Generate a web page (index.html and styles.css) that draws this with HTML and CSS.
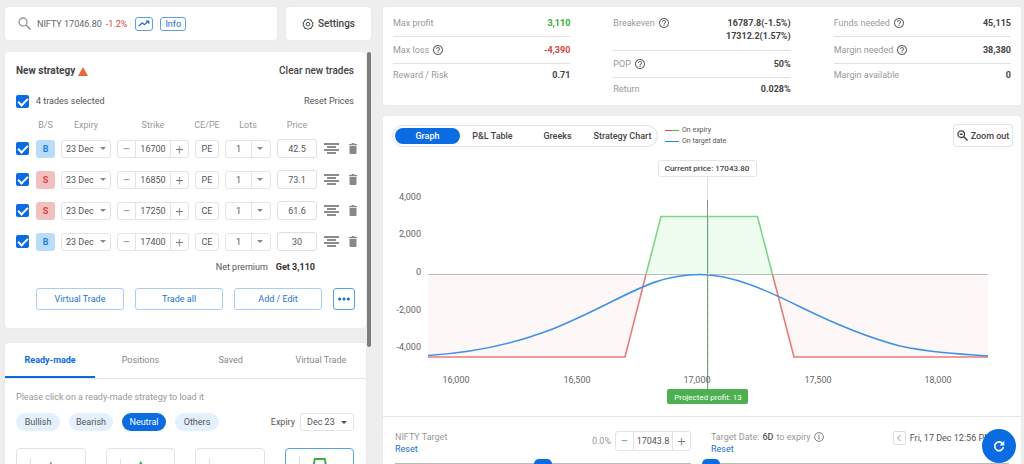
FILE: index.html
```html
<!DOCTYPE html>
<html lang="en">
<head>
<meta charset="utf-8">
<title>NIFTY strategy builder</title>
<link rel="stylesheet" href="styles.css">
</head>
<body>
<svg class="sprite" width="0" height="0" aria-hidden="true">
  <symbol id="help" viewBox="0 0 24 24"><path d="M11 18h2v-2h-2v2zm1-16C6.480 2 2 6.480 2 12s4.480 10 10 10 10-4.480 10-10S17.520 2 12 2zm0 18c-4.410 0-8-3.590-8-8s3.590-8 8-8 8 3.590 8 8-3.590 8-8 8zm0-14c-2.210 0-4 1.790-4 4h2c0-1.100.9-2 2-2s2 .9 2 2c0 2-3 1.750-3 5h2c0-2.250 3-2.500 3-5 0-2.210-1.790-4-4-4z"/></symbol>
  <symbol id="caret" viewBox="0 0 10 5"><path d="M0 0h10L5 5z"/></symbol>
  <symbol id="depth" viewBox="0 0 15 11"><path d="M0 1h15M3 4h9M0 7h15M3 10h9" fill="none" stroke="currentColor" stroke-width="1.300"/></symbol>
  <symbol id="trash" viewBox="0 0 8 11"><path d="M0 1h2.200L3 0h2l.8 1H8v1.200H0zM.5 3h7v7a1 1 0 0 1-1 1h-5a1 1 0 0 1-1-1z"/></symbol>
</svg>
<div class="app">
  <section class="left">
    <div class="topbar">
      <div class="card search">
        <svg class="search-icon" viewBox="0 0 13 13"><circle cx="5" cy="5" r="4" fill="none" stroke="currentColor" stroke-width="1.300"/><path d="M8 8l4.500 4.500" stroke="currentColor" stroke-width="1.600"/></svg>
        <span class="symbol-name">NIFTY 17046.80</span>
        <span class="down change">-1.2%</span>
        <button class="tag tag-chart" aria-label="Chart"><svg viewBox="0 0 12 7"><path d="M1 6l3.200-3.200 2.200 2L10.500 1M7.800 1h3v2.800" fill="none" stroke="currentColor" stroke-width="1.200"/></svg></button>
        <button class="tag">Info</button>
      </div>
      <button class="card settings">
        <svg viewBox="0 0 24 24"><path d="M12 1.500l2.600 2.700 3.700-.5.600 3.700 3.300 1.700L20.500 12.500l1.700 3.400-3.300 1.700-.6 3.700-3.700-.6L12 23l-2.600-2.300-3.700.6-.6-3.700-3.300-1.700 1.700-3.400-1.700-3.400 3.300-1.700.6-3.700 3.700.5z" fill="none" stroke="currentColor" stroke-width="2" stroke-linejoin="round"/><circle cx="12" cy="12.300" r="3.600" fill="none" stroke="currentColor" stroke-width="2"/></svg>
        Settings
      </button>
    </div>
    <div class="scroller">
      <div class="stack">
        <div class="card strategy">
          <div class="line title-line">
            <h2 class="title">New strategy <svg class="warn" viewBox="0 0 10 9"><path d="M5 0l5 9H0z"/></svg></h2>
            <button class="plain clear">Clear new trades</button>
          </div>
          <div class="line select-line">
            <label class="all"><input type="checkbox" class="tick" checked>4 trades selected</label>
            <button class="plain">Reset Prices</button>
          </div>
          <table class="trades">
            <colgroup><col class="c-tick"><col class="c-side"><col class="c-expiry"><col class="c-strike"><col class="c-type"><col class="c-lots"><col class="c-price"><col class="c-depth"><col class="c-trash"></colgroup>
            <thead><tr><th></th><th>B/S</th><th>Expiry</th><th>Strike</th><th>CE/PE</th><th>Lots</th><th>Price</th><th></th><th></th></tr></thead>
            <tbody>
              <tr>
                <td class="tick-cell"><input type="checkbox" class="tick" aria-label="Select 16700 PE" checked></td>
                <td><button class="side buy">B</button></td>
                <td><span class="pick"><select aria-label="Expiry"><option>23 Dec</option></select><svg class="caret"><use href="#caret"/></svg></span></td>
                <td><span class="stepper"><button aria-label="Lower strike">−</button><input type="text" aria-label="Strike" value="16700"><button aria-label="Raise strike">+</button></span></td>
                <td><button class="kind">PE</button></td>
                <td><span class="pick lots"><select aria-label="Lots"><option>1</option></select><svg class="caret"><use href="#caret"/></svg></span></td>
                <td><input type="text" class="price" aria-label="Price" value="42.5"></td>
                <td><button class="plain icon" aria-label="Market depth"><svg class="depth"><use href="#depth"/></svg></button></td>
                <td><button class="plain icon" aria-label="Delete"><svg class="trash"><use href="#trash"/></svg></button></td>
              </tr>
              <tr>
                <td class="tick-cell"><input type="checkbox" class="tick" aria-label="Select 16850 PE" checked></td>
                <td><button class="side sell">S</button></td>
                <td><span class="pick"><select aria-label="Expiry"><option>23 Dec</option></select><svg class="caret"><use href="#caret"/></svg></span></td>
                <td><span class="stepper"><button aria-label="Lower strike">−</button><input type="text" aria-label="Strike" value="16850"><button aria-label="Raise strike">+</button></span></td>
                <td><button class="kind">PE</button></td>
                <td><span class="pick lots"><select aria-label="Lots"><option>1</option></select><svg class="caret"><use href="#caret"/></svg></span></td>
                <td><input type="text" class="price" aria-label="Price" value="73.1"></td>
                <td><button class="plain icon" aria-label="Market depth"><svg class="depth"><use href="#depth"/></svg></button></td>
                <td><button class="plain icon" aria-label="Delete"><svg class="trash"><use href="#trash"/></svg></button></td>
              </tr>
              <tr>
                <td class="tick-cell"><input type="checkbox" class="tick" aria-label="Select 17250 CE" checked></td>
                <td><button class="side sell">S</button></td>
                <td><span class="pick"><select aria-label="Expiry"><option>23 Dec</option></select><svg class="caret"><use href="#caret"/></svg></span></td>
                <td><span class="stepper"><button aria-label="Lower strike">−</button><input type="text" aria-label="Strike" value="17250"><button aria-label="Raise strike">+</button></span></td>
                <td><button class="kind">CE</button></td>
                <td><span class="pick lots"><select aria-label="Lots"><option>1</option></select><svg class="caret"><use href="#caret"/></svg></span></td>
                <td><input type="text" class="price" aria-label="Price" value="61.6"></td>
                <td><button class="plain icon" aria-label="Market depth"><svg class="depth"><use href="#depth"/></svg></button></td>
                <td><button class="plain icon" aria-label="Delete"><svg class="trash"><use href="#trash"/></svg></button></td>
              </tr>
              <tr>
                <td class="tick-cell"><input type="checkbox" class="tick" aria-label="Select 17400 CE" checked></td>
                <td><button class="side buy">B</button></td>
                <td><span class="pick"><select aria-label="Expiry"><option>23 Dec</option></select><svg class="caret"><use href="#caret"/></svg></span></td>
                <td><span class="stepper"><button aria-label="Lower strike">−</button><input type="text" aria-label="Strike" value="17400"><button aria-label="Raise strike">+</button></span></td>
                <td><button class="kind">CE</button></td>
                <td><span class="pick lots"><select aria-label="Lots"><option>1</option></select><svg class="caret"><use href="#caret"/></svg></span></td>
                <td><input type="text" class="price" aria-label="Price" value="30"></td>
                <td><button class="plain icon" aria-label="Market depth"><svg class="depth"><use href="#depth"/></svg></button></td>
                <td><button class="plain icon" aria-label="Delete"><svg class="trash"><use href="#trash"/></svg></button></td>
              </tr>
            </tbody>
          </table>
          <div class="premium"><span>Net premium</span><b>Get 3,110</b></div>
          <div class="actions">
            <button class="action">Virtual Trade</button>
            <button class="action">Trade all</button>
            <button class="action">Add / Edit</button>
            <button class="action more" aria-label="More"><svg viewBox="0 0 12 4"><circle cx="1.700" cy="2" r="1.500"/><circle cx="6" cy="2" r="1.500"/><circle cx="10.300" cy="2" r="1.500"/></svg></button>
          </div>
        </div>
        <div class="card library">
          <div class="lib-tabs">
            <button class="lib-tab on">Ready-made</button>
            <button class="lib-tab">Positions</button>
            <button class="lib-tab">Saved</button>
            <button class="lib-tab">Virtual Trade</button>
          </div>
          <div class="lib-body">
            <p class="hint">Please click on a ready-made strategy to load it</p>
            <div class="filters">
              <button class="chip">Bullish</button>
              <button class="chip">Bearish</button>
              <button class="chip on">Neutral</button>
              <button class="chip">Others</button>
              <label class="expiry">Expiry <span class="pick dark"><select><option>Dec 23</option></select><svg class="caret"><use href="#caret"/></svg></span></label>
            </div>
            <div class="tiles">
              <button class="tile" aria-label="Short straddle"><svg viewBox="0 0 68 50"><path class="axis" d="M13.500 10v36"/><path class="gain" d="M22 40L34 15l12 25"/></svg></button>
              <button class="tile" aria-label="Iron butterfly"><svg viewBox="0 0 68 50"><path class="axis" d="M13.500 10v36"/><path class="gain" d="M24 40l7-20 3-6 3 6 7 20"/></svg></button>
              <button class="tile" aria-label="Short strangle"><svg viewBox="0 0 68 50"><path class="axis" d="M13.500 10v36"/><path class="gain" d="M22 40l8-20h8l8 20"/></svg></button>
              <button class="tile on" aria-label="Iron condor"><svg viewBox="0 0 68 50"><path class="axis" d="M13.500 7v36"/><path class="gain" d="M24 36l5-26h10l5 26"/></svg></button>
            </div>
          </div>
        </div>
      </div>
      <div class="bar"></div>
    </div>
  </section>
  <main class="right">
    <dl class="card stats">
      <div class="col">
        <div class="stat"><dt>Max profit</dt><dd class="up">3,110</dd></div>
        <div class="stat"><dt>Max loss <svg class="help"><use href="#help"/></svg></dt><dd class="down">-4,390</dd></div>
        <div class="stat"><dt>Reward / Risk</dt><dd>0.71</dd></div>
      </div>
      <div class="col">
        <div class="stat"><dt>Breakeven <svg class="help"><use href="#help"/></svg></dt><dd class="double">16787.8(-1.5%)<br>17312.2(1.57%)</dd></div>
        <div class="stat"><dt>POP <svg class="help"><use href="#help"/></svg></dt><dd>50%</dd></div>
        <div class="stat"><dt>Return</dt><dd>0.028%</dd></div>
      </div>
      <div class="col">
        <div class="stat"><dt>Funds needed <svg class="help"><use href="#help"/></svg></dt><dd>45,115</dd></div>
        <div class="stat"><dt>Margin needed <svg class="help"><use href="#help"/></svg></dt><dd>38,380</dd></div>
        <div class="stat"><dt>Margin available</dt><dd>0</dd></div>
      </div>
    </dl>
    <div class="card graph">
      <div class="graph-head">
        <div class="views">
          <button class="view on">Graph</button>
          <button class="view">P&amp;L Table</button>
          <button class="view">Greeks</button>
          <button class="view">Strategy Chart</button>
        </div>
        <div class="legend">
          <span><i class="key expiry-key"></i>On expiry</span>
          <span><i class="key date-key"></i>On target date</span>
        </div>
        <button class="zoom-out"><svg viewBox="0 0 11 11"><circle cx="4.200" cy="4.200" r="3.300" fill="none" stroke="currentColor" stroke-width="1.300"/><path d="M2.700 4.200h3M6.800 6.800l3.700 3.700" stroke="currentColor" stroke-width="1.400" fill="none"/></svg>Zoom out</button>
      </div>
      <svg class="payoff" viewBox="0 0 638 260" role="img" aria-label="Payoff by NIFTY price">
        <path class="loss-area" d="M45 118.500H263L242 201H45zM389.500 118.500H605V201H411z"/>
        <path class="gain-area" d="M263 118.500L278 60.500H374.500L389.500 118.500z"/>
        <path class="zero" d="M45 118.500H605"/>
        <path class="loss" d="M45 201H242L263 118.500M389.500 118.500L411 201H605"/>
        <path class="profit" d="M263 118.500L278 60.500H374.500L389.500 118.500"/>
        <path class="target" d="M45 199.500C85 197 124 190 163.700 175.300C186 167 208 156 230 145C260 130 283 118.500 317 118.500C350 118.500 385 135 417 150.700C450 167 483 181 517 190C545 196 575 198 605 200"/>
        <path class="stem" d="M324.500 20V45"/>
        <path class="now" d="M324.500 44V233"/>
        <path class="now-soft" d="M325.500 60V233"/>
        <g class="ticks y">
          <text x="38" y="44">4,000</text><text x="38" y="81">2,000</text><text x="38" y="119">0</text><text x="38" y="157">-2,000</text><text x="38" y="194">-4,000</text>
        </g>
        <g class="ticks x">
          <text x="73" y="227">16,000</text><text x="194" y="227">16,500</text><text x="314" y="227">17,000</text><text x="435" y="227">17,500</text><text x="555" y="227">18,000</text>
        </g>
        <rect class="price-box" x="275.500" y="4.500" width="98" height="16" rx="2"/>
        <text class="price-text" x="324" y="15">Current price: 17043.80</text>
        <rect class="profit-box" x="284" y="233" width="81" height="15" rx="2"/>
        <text class="profit-text" x="325" y="244">Projected profit: 13</text>
      </svg>
      <div class="controls">
        <div class="control">
          <div class="control-head">
            <div class="name"><span>NIFTY Target</span><a href="#">Reset</a></div>
            <span class="pct">0.0%</span>
            <span class="stepper wide"><button aria-label="Lower target">−</button><input type="text" aria-label="NIFTY target" value="17043.8"><button aria-label="Raise target">+</button></span>
          </div>
          <input type="range" class="slider" aria-label="NIFTY target" min="0" max="100" value="50">
        </div>
        <div class="control">
          <div class="control-head">
            <div class="name"><span>Target Date: <b>6D</b> to expiry <svg class="info" viewBox="0 0 12 12"><circle cx="6" cy="6" r="5.300" fill="none" stroke="currentColor"/><path d="M6 5.200V9M6 3v1.300" stroke="currentColor" stroke-width="1.200"/></svg></span><a href="#">Reset</a></div>
            <div class="date">
              <button class="step" aria-label="Previous day"><svg viewBox="0 0 6 8"><path d="M4.500 1L1.500 4l3 3" fill="none" stroke="currentColor"/></svg></button>
              <span>Fri, 17 Dec 12:56 PM</span>
              <button class="step" aria-label="Next day"><svg viewBox="0 0 6 8"><path d="M1.500 1l3 3-3 3" fill="none" stroke="currentColor"/></svg></button>
            </div>
          </div>
          <input type="range" class="slider from-start" aria-label="Target date" min="0" max="6" value="0">
        </div>
      </div>
    </div>
  </main>
</div>
<button class="fab" aria-label="Refresh"><svg viewBox="0 0 24 24"><path d="M18.500 8.500A7.500 7.500 0 1 0 19.500 14" fill="none" stroke="currentColor" stroke-width="2.800"/><path d="M21 3v8h-8z"/></svg></button>
</body>
</html>
```
FILE: styles.css
```css
* { box-sizing: border-box; }
html { overflow: hidden; }
body {
  margin: 0;
  height: 100vh;
  overflow: hidden;
  background: #eee;
  color: #555;
  font: 9px/12px Roboto, "Liberation Sans", sans-serif;
}
button, input, select { font: inherit; color: inherit; margin: 0; padding: 0; border: 0; background: none; }
button { cursor: pointer; }
svg { display: block; fill: currentColor; }
h2, p, dl, dd { margin: 0; }
a { color: #1b6fd0; text-decoration: none; }
.sprite { position: absolute; }
.card { background: #fff; border-radius: 3px; box-shadow: 0 0 1px #0002; }
.up { color: #2eb135; }
.down { color: #d84343; }
.plain { display: inline-block; }

.app {
  display: grid;
  grid-template-columns: minmax(0, 366fr) minmax(0, 638fr);
  gap: 12px;
  height: 100vh;
  overflow: hidden;
  padding: 7px 3px 0 5px;
}

/* Search and settings */
.topbar { display: flex; gap: 9px; }
.search { flex: 1; display: flex; align-items: center; height: 33px; padding-left: 13px; }
.search-icon { width: 13px; height: 13px; color: #999; margin-right: 6px; }
.symbol-name { color: #666; margin-right: 4px; }
.change { margin-right: 8px; }
.tag { height: 14px; padding: 0 4px; border: 1px solid #5b9fe8; border-radius: 3px; color: #1b6fd0; margin-right: 7px; }
.tag-chart { padding: 0 2px; }
.tag-chart svg { width: 12px; height: 7px; }
.settings { display: flex; align-items: center; justify-content: center; gap: 4px; width: 85px; font-size: 10px; font-weight: 500; color: #444; }
.settings svg { width: 12px; height: 12px; }

.scroller { display: flex; align-items: flex-start; gap: 1px; margin-top: 12px; }
.stack { flex: 1; display: grid; gap: 15px; min-width: 0; }
.bar { width: 4px; height: 295px; border-radius: 2px; background: #7d7d7d; }

/* New strategy */
.strategy { padding: 11px 4px 18px 11px; }
.line { display: flex; align-items: center; justify-content: space-between; padding-right: 8px; }
.title-line { height: 16px; }
.title { display: flex; align-items: center; gap: 3px; font-size: 10px; font-weight: 700; color: #444; }
.warn { width: 10px; height: 9px; color: #e8683a; }
.clear { font-size: 10px; font-weight: 500; color: #444; }
.select-line { height: 14px; margin-top: 15px; }
.all { display: flex; align-items: center; gap: 7px; }
.tick { appearance: none; display: block; width: 13px; height: 13px; border-radius: 2px; background: #0a6be2; }
.tick:checked::after { content: ""; display: block; width: 8px; height: 4px; margin: 3px 0 0 2px; border: solid #fff; border-width: 0 0 2px 2px; transform: rotate(-45deg); }

.trades { width: 100%; table-layout: fixed; border-collapse: collapse; margin-top: 8px; }
.trades th { height: 17px; padding: 0; font-weight: 400; color: #999; text-align: center; white-space: nowrap; }
.trades td { height: 31px; padding: 0 3px; text-align: center; }
.trades .tick-cell { padding: 0; }
.c-tick { width: 17px; } .c-side { width: 25px; } .c-expiry { width: 56px; } .c-strike { width: 78px; }
.c-type { width: 30px; } .c-lots { width: 52px; } .c-price { width: 46px; } .c-depth { width: 23px; } .c-trash { width: 19px; }
.side { display: block; width: 100%; height: 18px; border-radius: 3px; font-weight: 700; }
.buy { background: #bbdcf8; color: #1c7de0; }
.sell { background: #f2c0c0; color: #d84343; }
.pick { display: grid; align-items: center; height: 18px; border: 1px solid #e4e4e4; border-radius: 3px; }
.pick > * { grid-area: 1 / 1; }
.pick select { appearance: none; width: 100%; height: 16px; padding-left: 4px; }
.caret { width: 6px; height: 3px; justify-self: end; margin-right: 4px; color: #888; pointer-events: none; }
.lots select { padding-left: 10px; }
.lots .caret { margin-right: 7px; }
.lots { background: linear-gradient(#e4e4e4, #e4e4e4) 25px 0 / 1px 100% no-repeat; }
.stepper { display: grid; grid-template-columns: 17px 1fr 17px; height: 18px; border: 1px solid #e4e4e4; border-radius: 3px; }
.stepper button { color: #777; font-size: 14px; line-height: 14px; font-weight: 300; }
.stepper input { min-width: 0; width: 100%; text-align: center; border: solid #e4e4e4; border-width: 0 1px; }
.kind { display: block; width: 100%; height: 18px; border: 1px solid #e4e4e4; border-radius: 3px; }
.price { display: block; width: 100%; height: 19px; border: 1px solid #e0e0e0; border-radius: 3px; text-align: center; }
.icon { display: grid; place-items: center; width: 100%; }
.depth { width: 15px; height: 11px; color: #666; }
.trash { width: 8px; height: 11px; color: #888; }

.premium { display: flex; justify-content: flex-end; gap: 8px; margin-top: 4px; padding-right: 47px; }
.premium b { color: #333; }
.actions { display: flex; gap: 11px; margin-top: 15px; padding: 0 7px 0 20px; }
.action { flex: 1; height: 22px; border: 1px solid #a9cdf3; border-radius: 3px; color: #2474cf; }
.more { flex: 0 0 22px; display: grid; place-items: center; border-color: #5b9fe8; color: #0a6be2; }
.more svg { width: 12px; height: 4px; }

/* Strategy library */
.lib-tabs { display: grid; grid-template-columns: repeat(4, 1fr); border-bottom: 1px solid #e6e6e6; }
.lib-tab { height: 35px; border-bottom: 2px solid transparent; color: #888; }
.lib-tab.on { border-color: #0a6be2; color: #0a6be2; font-weight: 700; }
.lib-body { padding: 12px 12px 0 11px; }
.hint { color: #999; }
.filters { display: flex; align-items: center; gap: 9px; margin-top: 10px; }
.chip { width: 44px; height: 18px; border-radius: 9px; background: #e3f0fd; }
.chip.on { background: #0a6be2; color: #fff; }
.expiry { display: flex; align-items: center; gap: 5px; margin-left: auto; }
.dark { width: 54px; }
.dark select { padding-left: 6px; }
.dark .caret { margin-right: 6px; color: #555; }
.tiles { display: grid; grid-template-columns: repeat(4, 1fr); gap: 20px; margin-top: 17px; }
.tile { display: grid; align-items: start; height: 60px; border: 1px solid #e2e2e2; border-radius: 4px; }
.tile.on { border-color: #5b9fe8; }
.tile svg { width: 100%; }
.axis { fill: none; stroke: #ddd; }
.gain { fill: none; stroke: #3fae49; stroke-width: 2; }

/* Key figures */
.right { display: grid; gap: 11px; align-content: start; }
.stats { display: grid; grid-template-columns: repeat(3, 1fr); gap: 43px; padding: 3px 10px 5px; }
.stat { display: flex; justify-content: space-between; align-items: flex-start; padding: 7px 0; border-bottom: 1px solid #e2e2e2; line-height: 12px; }
.stat:last-child { border: 0; padding: 5px 0; }
.stat dt { display: flex; align-items: center; gap: 3px; color: #999; }
.stat dd { font-weight: 700; text-align: right; }
.stat dd:not(.up, .down) { color: #444; }
.stat .double { line-height: 13px; }
.help { width: 12px; height: 12px; color: #666; }

/* Payoff graph */
.graph { display: grid; }
.graph-head { display: flex; align-items: center; padding: 8px 8px 0 9px; }
.views { display: grid; grid-template-columns: repeat(4, 65px); height: 22px; padding: 2px; border: 1px solid #e2e2e2; border-radius: 11px; }
.view { border-radius: 8px; font-weight: 500; color: #444; white-space: nowrap; }
.view.on { background: #0a6be2; color: #fff; }
.legend { display: grid; margin-left: 7px; font-size: 7px; line-height: 11px; }
.legend span { display: flex; align-items: center; gap: 3px; }
.key { width: 14px; height: 1px; background: #2f86e0; }
.expiry-key { background: linear-gradient(90deg, #e04848 50%, #45b94c 50%); }
.zoom-out { display: flex; align-items: center; justify-content: center; gap: 3px; width: 60px; height: 23px; margin-left: auto; border: 1px solid #e2e2e2; border-radius: 3px; font-weight: 500; color: #444; }
.zoom-out svg { width: 11px; height: 11px; }
.payoff { width: 100%; margin-top: 9px; }
.loss-area { fill: #fdf8f7; }
.gain-area { fill: #effcf0; }
.zero { stroke: #bbb; }
.loss, .profit, .target { fill: none; stroke-width: 1.6px; }
.loss { stroke: #e67c7c; }
.profit { stroke: #7fd586; }
.target { stroke: #3f91e8; }
.stem { stroke: #ddd; }
.now { stroke: #7f9c82; }
.now-soft { stroke: #b5e6b8; stroke-dasharray: 1 1; }
.ticks text { font-size: 9px; fill: #666; }
.y text { text-anchor: end; }
.x text { text-anchor: middle; }
.price-box { fill: #fff; stroke: #e6e6e6; }
.price-text { font-size: 8px; font-weight: 500; fill: #444; text-anchor: middle; }
.profit-box { fill: #4caf50; }
.profit-text { font-size: 8px; fill: #fff; text-anchor: middle; }

.controls { display: grid; grid-template-columns: 296fr 298fr; gap: 20px; padding: 14px 12px 0; border-top: 1px solid #e6e6e6; }
.control-head { display: flex; }
.name { flex: 1; display: grid; color: #999; white-space: nowrap; }
.name span { display: flex; align-items: center; gap: 3px; }
.name b { color: #555; font-weight: 500; }
.info { width: 10px; height: 10px; color: #666; }
.pct { margin: 4px 4px 0 0; color: #999; }
.wide { width: 76px; height: 20px; }
.date { display: flex; gap: 4px; height: 14px; align-items: center; white-space: nowrap; }
.step { display: grid; place-items: center; width: 13px; height: 14px; border: 1px solid #ddd; border-radius: 2px; color: #999; }
.step svg { width: 6px; height: 8px; }
.slider { appearance: none; display: block; width: 100%; height: 18px; background: linear-gradient(#bbb, #bbb) 0 50% / 100% 2px no-repeat; }
.slider::-webkit-slider-thumb { appearance: none; width: 18px; height: 10px; border-radius: 5px; background: #0a6be2; }
.from-start { width: calc(100% + 9px); margin-left: -9px; }
.fab { position: fixed; right: 8px; bottom: 1px; display: grid; place-items: center; width: 34px; height: 34px; border-radius: 50%; background: #0a6be2; color: #fff; }
.fab svg { width: 14px; height: 14px; }
```
